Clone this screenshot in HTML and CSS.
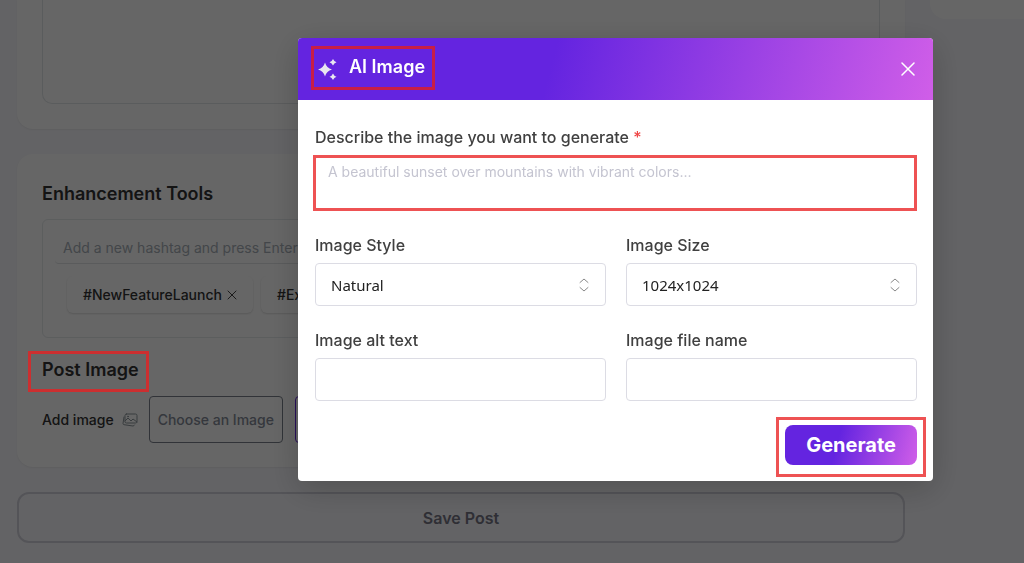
FILE: index.html
```
<!DOCTYPE html>
<html lang="en">
<head>
<meta charset="UTF-8" />
<meta name="viewport" content="width=device-width, initial-scale=1.0" />
<title>AI Image</title>
<link rel="stylesheet" href="styles.css">
</head>
<body>

<div class="page">
  <main class="main">
    <section class="card card-editor">
      <div class="editor"></div>
    </section>

    <section class="card">
      <h2>Enhancement Tools</h2>
      <div class="hashtags">
        <input type="text" class="hashtag-input" aria-label="Hashtag" placeholder="Add a new hashtag and press Enter" />
        <div class="tags">
          <span class="tag">#NewFeatureLaunch
            <button class="tag-remove" aria-label="Remove">
              <svg width="10" height="10" viewBox="0 0 10 10"><path d="M1 1l8 8M9 1l-8 8" /></svg>
            </button>
          </span>
          <span class="tag">#ExcitingNews
            <button class="tag-remove" aria-label="Remove">
              <svg width="10" height="10" viewBox="0 0 10 10"><path d="M1 1l8 8M9 1l-8 8" /></svg>
            </button>
          </span>
        </div>
      </div>

      <h2><span class="marked mark-heading">Post Image</span></h2>
      <div class="image-row">
        <span class="image-label">Add image</span>
        <svg class="image-icon" width="16" height="14" viewBox="0 0 16 14">
          <rect x="3" y="1" width="12" height="9" rx="1.5" />
          <path d="M3 8l3-3 3 3 2-2 4 3M2 4L1 10.500q0 1 1 1.200L11 13q1 0 1.500-1" />
          <circle cx="6" cy="3.500" r=".5" />
        </svg>
        <button class="btn-outline">Choose an Image</button>
        <button class="btn-outline btn-ai">AI Image</button>
      </div>
    </section>

    <button class="btn-save">Save Post</button>
  </main>
  <aside class="sidebar"></aside>
</div>

<div class="overlay">
  <div class="modal" role="dialog" aria-labelledby="modal-title">
    <div class="modal-header">
      <div class="modal-title marked mark-title">
        <svg width="20" height="22" viewBox="0 0 20 22" fill="#e8e6f0">
          <path d="M7 4.500Q8.500 10 14 11.500Q8.500 13 7 18.500Q5.500 13 0 11.500Q5.500 10 7 4.500z" />
          <path d="M15 1Q16 3.500 18.500 4.300Q16 5.200 15 7.600Q14 5.200 11.500 4.300Q14 3.500 15 1z" />
          <path d="M15 15.500Q16 18 18.500 18.800Q16 19.600 15 22Q14 19.600 11.500 18.800Q14 18 15 15.500z" />
        </svg>
        <h3 id="modal-title">AI Image</h3>
      </div>
      <button class="modal-close" aria-label="Close">
        <svg width="14" height="14" viewBox="0 0 14 14"><path d="M1 1l12 12M13 1l-12 12" /></svg>
      </button>
    </div>

    <form class="modal-body">
      <div class="field field-wide">
        <label for="prompt">Describe the image you want to generate <span class="required">*</span></label>
        <div class="marked mark-prompt">
          <textarea id="prompt" placeholder="A beautiful sunset over mountains with vibrant colors..."></textarea>
        </div>
      </div>
      <div class="field">
        <label for="style">Image Style</label>
        <div class="select-wrap">
          <select id="style"><option>Natural</option></select>
          <svg width="10" height="14" viewBox="0 0 10 14"><path d="M1 4.500l4-3.500 4 3.500M1 9.500l4 3.500 4-3.500" /></svg>
        </div>
      </div>
      <div class="field">
        <label for="size">Image Size</label>
        <div class="select-wrap">
          <select id="size"><option>1024x1024</option></select>
          <svg width="10" height="14" viewBox="0 0 10 14"><path d="M1 4.500l4-3.500 4 3.500M1 9.500l4 3.500 4-3.500" /></svg>
        </div>
      </div>
      <div class="field">
        <label for="alt">Image alt text</label>
        <input type="text" id="alt" />
      </div>
      <div class="field">
        <label for="filename">Image file name</label>
        <input type="text" id="filename" />
      </div>
      <div class="actions">
        <div class="marked mark-button">
          <button type="button" class="btn-generate">Generate</button>
        </div>
      </div>
    </form>
  </div>
</div>

</body>
</html>
```
FILE: styles.css
```
* {
  box-sizing: border-box;
}

body {
  margin: 0;
  min-height: 100vh;
  font-family: Inter, sans-serif;
  background: #f8f8fc;
  color: #333;
  overflow: hidden;
}

button, input, select, textarea {
  font-family: inherit;
}

svg path, svg rect, svg circle {
  stroke-linecap: round;
  stroke-linejoin: round;
}

/* post editor page */
.page {
  display: flex;
  align-items: flex-start;
  gap: 25px;
  padding-left: 17px;
}

.main {
  flex: 1;
  display: flex;
  flex-direction: column;
  gap: 25px;
}

.card {
  background: #fff;
  border-radius: 16px;
  padding: 28px 25px 24px;
  box-shadow: 0 1px 2px rgba(0,0,0,0.06);
}

.card-editor {
  padding-top: 0;
  padding-bottom: 25px;
  border-radius: 0 0 16px 16px;
}

.editor {
  height: 104px;
  border: 1px solid #e2e6e8;
  border-top: none;
  border-radius: 0 0 10px 10px;
}

.sidebar {
  width: 94px;
  height: 19px;
  background: #fff;
  border-radius: 0 0 0 16px;
}

h2 {
  margin: 0;
  font-size: 18px;
  line-height: 24px;
  font-weight: 600;
  color: #333;
}

.hashtags {
  margin: 13px 0 20px;
  padding: 12px;
  height: 119px;
  border: 1px solid #e6eaec;
  border-radius: 6px;
}

.hashtag-input {
  display: block;
  width: 100%;
  height: 32px;
  padding: 0 8px;
  border: none;
  border-bottom: 1px solid #e0e3e5;
  background: none;
  font-size: 14px;
}

.hashtag-input::placeholder {
  color: #a8b0b8;
}

.tags {
  display: flex;
  gap: 8px;
  padding: 12px;
}

.tag {
  display: flex;
  align-items: center;
  gap: 5px;
  height: 37px;
  padding: 0 16px;
  border-radius: 6px;
  font-size: 14px;
  font-weight: 500;
  color: #333;
  box-shadow: 0 1px 2px rgba(0,0,0,0.14);
}

.tag-remove {
  display: flex;
  padding: 0;
  border: none;
  background: none;
}

.tag-remove path {
  stroke: #444;
}

.image-row {
  display: flex;
  align-items: center;
  margin-top: 14px;
}

.image-label {
  font-size: 14px;
  font-weight: 500;
}

.image-icon {
  margin: 0 11px 0 8px;
  fill: none;
  stroke: #8d969c;
}

.btn-outline {
  height: 47px;
  margin-right: 12px;
  padding: 0 8px;
  border: 1px solid #7a808c;
  border-radius: 4px;
  background: none;
  font-size: 14px;
  font-weight: 500;
  color: #848b98;
}

.btn-ai {
  border-color: #6424e0;
  color: #6424e0;
}

.btn-save {
  height: 51px;
  border: 2px solid #d2d2dc;
  border-radius: 12px;
  background: none;
  font-size: 16px;
  font-weight: 600;
  color: #757585;
}

/* modal */
.overlay {
  position: fixed;
  inset: 0;
  z-index: 10;
  display: flex;
  align-items: flex-start;
  padding: 38px 91px 0 298px;
  background: rgba(0,0,0,0.6);
}

.modal {
  flex: 1;
  border-radius: 4px;
  background: #fff;
  overflow: hidden;
  box-shadow: 0 8px 32px rgba(0,0,0,0.2);
}

.modal-header {
  display: flex;
  align-items: center;
  justify-content: space-between;
  height: 62px;
  padding: 0 18px 0 20px;
  background: linear-gradient(105deg, #6424e0 40%, #d05ee8);
}

.modal-title {
  display: flex;
  align-items: center;
  gap: 11px;
}

h3 {
  margin: 0;
  padding-bottom: 4px;
  font-size: 18px;
  line-height: 24px;
  font-weight: 600;
  color: #fff;
}

.modal-close {
  display: flex;
  padding: 0;
  border: none;
  background: none;
}

.modal-close path {
  stroke: #fff;
  stroke-width: 1.5;
}

.modal-body {
  display: grid;
  grid-template-columns: 1fr 1fr;
  gap: 24px 20px;
  padding: 27px 16px 16px 17px;
}

.field-wide, .actions {
  grid-column: 1 / -1;
}

.field {
  display: flex;
  flex-direction: column;
  gap: 8px;
}

label {
  font-size: 16px;
  line-height: 20px;
  font-weight: 500;
  color: #404040;
}

.required {
  color: #ef4444;
}

textarea, input, select {
  width: 100%;
  border: 1px solid #dcdce4;
  border-radius: 4px;
  background: #fff;
}

textarea {
  display: block;
  height: 56px;
  padding: 6px 12px;
  font-size: 14px;
  line-height: 20px;
  resize: none;
}

textarea::placeholder {
  color: #c4c4d0;
}

.field input, select {
  height: 43px;
  padding: 0 15px;
}

select {
  appearance: none;
  font-family: "Noto Sans", sans-serif;
  font-size: 15px;
  color: #222;
}

.select-wrap {
  display: grid;
  align-items: center;
}

.select-wrap select, .select-wrap svg {
  grid-area: 1 / 1;
}

.select-wrap svg {
  justify-self: end;
  margin-right: 17px;
  fill: none;
  stroke: #888;
  pointer-events: none;
}

.actions {
  display: flex;
  justify-content: flex-end;
}

.btn-generate {
  height: 40px;
  padding: 0 21px;
  border: none;
  border-radius: 8px;
  background: linear-gradient(105deg, #6424e0 40%, #d05ee8);
  font-size: 20px;
  font-weight: 700;
  color: #fff;
}

/* red highlight frames */
.marked {
  position: relative;
}

.marked::after {
  content: "";
  position: absolute;
  z-index: 20;
  border: 3px solid #ee5253;
  pointer-events: none;
}

.mark-heading::after {
  inset: -8px -10px -12px -14px;
  border-color: #cc2f30;
}

.mark-title::after {
  inset: -9px -10px -7px -7px;
  border-color: #c81e46;
}

.mark-prompt::after {
  inset: 0 0 0 -2px;
}

.mark-button::after {
  inset: -8px -9px -12px -9px;
}
```
